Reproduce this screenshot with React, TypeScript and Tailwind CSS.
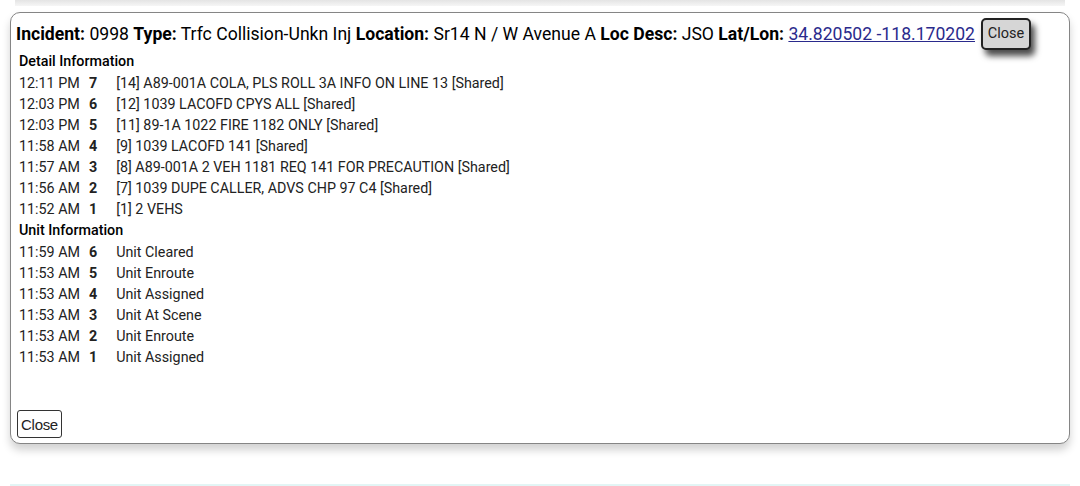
import React from 'react';

const details = [
  ['12:11 PM', '7', '[14] A89-001A COLA, PLS ROLL 3A INFO ON LINE 13 [Shared]'],
  ['12:03 PM', '6', '[12] 1039 LACOFD CPYS ALL [Shared]'],
  ['12:03 PM', '5', '[11] 89-1A 1022 FIRE 1182 ONLY [Shared]'],
  ['11:58 AM', '4', '[9] 1039 LACOFD 141 [Shared]'],
  ['11:57 AM', '3', '[8] A89-001A 2 VEH 1181 REQ 141 FOR PRECAUTION [Shared]'],
  ['11:56 AM', '2', '[7] 1039 DUPE CALLER, ADVS CHP 97 C4 [Shared]'],
  ['11:52 AM', '1', '[1] 2 VEHS'],
];

const units = [
  ['11:59 AM', '6', 'Unit Cleared'],
  ['11:53 AM', '5', 'Unit Enroute'],
  ['11:53 AM', '4', 'Unit Assigned'],
  ['11:53 AM', '3', 'Unit At Scene'],
  ['11:53 AM', '2', 'Unit Enroute'],
  ['11:53 AM', '1', 'Unit Assigned'],
];

const Rows = ({ rows }: { rows: string[][] }) => (
  <table className="border-collapse">
    <tbody>
      {rows.map((r, i) => (
        <tr key={i} className="h-[21px]">
          <td className="p-0 pr-[9px] whitespace-nowrap">{r[0]}</td>
          <td className="p-0 pr-[19px] font-bold">{r[1]}</td>
          <td className="p-0 whitespace-nowrap">{r[2]}</td>
        </tr>
      ))}
    </tbody>
  </table>
);

export default function App() {
  return (
    <div className="w-[1080px] h-[486px] bg-white overflow-hidden text-[#222] font-['Roboto',sans-serif] relative">
      <div className="mx-[15px] h-[6px] bg-gradient-to-b from-[#e4e4e4] to-[#f6f6f6]" />
      <div className="px-[10px] pt-[6px]">
        <div className="h-[432px] border border-[#858585] rounded-[10px] bg-white shadow-[0_6px_8px_rgba(0,0,0,0.18)] pl-[5px] pr-[6px] pt-[5px] pb-[5px] flex flex-col">
          <div className="flex items-center text-[17.6px] leading-[32px] text-black">
            <div className="whitespace-nowrap">
              <b className="font-bold">Incident:</b> 0998 <b className="font-bold">Type:</b> Trfc Collision-Unkn Inj{' '}
              <b className="font-bold">Location:</b> Sr14 N / W Avenue A <b className="font-bold">Loc Desc:</b> JSO{' '}
              <b className="font-bold">Lat/Lon:</b>{' '}
              <a href="#" className="text-[#2a2a8c] underline">34.820502 -118.170202</a>
            </div>
            <button className="ml-[6px] h-[32px] w-[50px] bg-[#d6d6d6] border-2 border-[#222] rounded-[5px] text-[14.5px] leading-none text-[#222] shadow-[4px_6px_6px_rgba(0,0,0,0.7)]">
              Close
            </button>
          </div>
          <div className="text-[14.3px] leading-[21px] pl-[3px]">
            <div className="font-medium text-black leading-[23px]">Detail Information</div>
            <Rows rows={details} />
            <div className="font-medium text-black leading-[21px] mb-[1px]">Unit Information</div>
            <Rows rows={units} />
          </div>
          <div className="mt-auto pl-[1px]">
            <button className="h-[28px] w-[45px] bg-white border border-[#333] rounded-[3px] text-[15px] leading-none text-[#222] font-['Liberation_Sans',sans-serif] tracking-[-0.3px]">
              Close
            </button>
          </div>
        </div>
      </div>
      <div className="absolute left-[10px] right-[10px] top-[484px] h-[2px] bg-[#e3f5f5]" />
    </div>
  );
}
